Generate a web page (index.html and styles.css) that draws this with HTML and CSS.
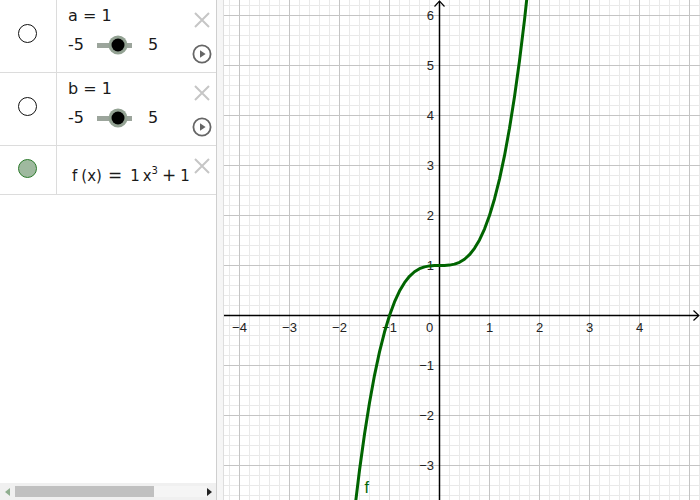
FILE: index.html
```html
<!DOCTYPE html>
<html>
<head>
<meta charset="utf-8">
<link rel="stylesheet" href="styles.css">
</head>
<body>
<div class="app">
  <div class="algebra">
    <div class="row row-slider">
      <div class="marble-col"><span class="marble"></span></div>
      <div class="content">
        <div class="name">a = 1</div>
        <div class="slider-line"><span class="min">-5</span><span class="track"><span class="knob" style="left:60%"></span></span><span class="max">5</span></div>
      </div>
      <div class="controls">
        <svg class="cross" width="18" height="18" viewBox="0 0 18 18"><path d="M2 2L16 16M16 2L2 16"/></svg>
        <svg class="play" width="20" height="20" viewBox="0 0 20 20"><circle cx="10" cy="10" r="8.6"/><path d="M8 6.3L13.6 10L8 13.7Z"/></svg>
      </div>
    </div>
    <div class="row row-slider">
      <div class="marble-col"><span class="marble"></span></div>
      <div class="content">
        <div class="name">b = 1</div>
        <div class="slider-line"><span class="min">-5</span><span class="track"><span class="knob" style="left:60%"></span></span><span class="max">5</span></div>
      </div>
      <div class="controls">
        <svg class="cross" width="18" height="18" viewBox="0 0 18 18"><path d="M2 2L16 16M16 2L2 16"/></svg>
        <svg class="play" width="20" height="20" viewBox="0 0 20 20"><circle cx="10" cy="10" r="8.6"/><path d="M8 6.3L13.6 10L8 13.7Z"/></svg>
      </div>
    </div>
    <div class="row row-func">
      <div class="marble-col func-col"><span class="marble marble-on"></span></div>
      <div class="content">
        <div class="math"><span>f</span><span class="paren">(x)</span><span class="op eq">=</span><span>1</span><span class="var">x</span><sup>3</sup><span class="op plus">+</span><span>1</span></div>
      </div>
      <div class="controls">
        <svg class="cross" width="18" height="18" viewBox="0 0 18 18"><path d="M2 2L16 16M16 2L2 16"/></svg>
      </div>
    </div>
    <div class="spacer"></div>
    <div class="hscroll">
      <span class="arrow-cell"><span class="arr-left"></span></span>
      <span class="thumb"></span>
      <span class="scroll-rest"></span>
      <span class="arr-right"></span>
    </div>
  </div>
  <div class="splitter"></div>
  <div class="graphics">
    <svg class="plot" width="476" height="500" viewBox="0 0 476 500">
      <defs>
        <pattern id="minor" patternUnits="userSpaceOnUse" x="439" y="315" width="10" height="10">
          <path d="M0.5 0V10M0 0.5H10" stroke="#e9e9e9" stroke-width="1" fill="none"/>
        </pattern>
        <pattern id="major" patternUnits="userSpaceOnUse" x="439" y="315" width="50" height="50">
          <path d="M0.5 0V50M0 0.5H50" stroke="#c4c4c4" stroke-width="1" fill="none"/>
        </pattern>
      </defs>
      <g transform="translate(-224 0)">
        <rect x="224" y="0" width="476" height="500" fill="#ffffff"/>
        <rect x="224" y="0" width="476" height="500" fill="url(#minor)"/>
        <rect x="224" y="0" width="476" height="500" fill="url(#major)"/>
        <g class="axes">
          <path d="M224 315.5H698.5"/>
          <path d="M439.5 500V1"/>
          <path class="arrowhead" d="M693.5 310.5L698.8 315.5L693.5 320.5"/>
          <path class="arrowhead" d="M434.5 6.5L439.5 1.2L444.5 6.5"/>
        </g>
        <g class="xlabels">
          <text x="239.5" y="331.5">−4</text>
          <text x="289.5" y="331.5">−3</text>
          <text x="339.5" y="331.5">−2</text>
          <text x="389.5" y="331.5">−1</text>
          <text x="429.5" y="331.5">0</text>
          <text x="489.5" y="331.5">1</text>
          <text x="539.5" y="331.5">2</text>
          <text x="589.5" y="331.5">3</text>
          <text x="639.5" y="331.5">4</text>
        </g>
        <g class="ylabels">
          <text x="434" y="20">6</text>
          <text x="434" y="70">5</text>
          <text x="434" y="120">4</text>
          <text x="434" y="170">3</text>
          <text x="434" y="220">2</text>
          <text x="434" y="270">1</text>
          <text x="434" y="370">−1</text>
          <text x="434" y="420">−2</text>
          <text x="434" y="470">−3</text>
        </g>
        <g transform="translate(439.5 315.5) scale(50 -50)">
          <polyline class="curve" points="-1.75,-4.359 -1.7,-3.913 -1.6,-3.096 -1.5,-2.375 -1.4,-1.744 -1.3,-1.197 -1.2,-0.728 -1.1,-0.331 -1,0 -0.9,0.271 -0.8,0.488 -0.7,0.657 -0.6,0.784 -0.5,0.875 -0.4,0.936 -0.3,0.973 -0.2,0.992 -0.1,0.999 0,1 0.1,1.001 0.2,1.008 0.3,1.027 0.4,1.064 0.5,1.125 0.6,1.216 0.7,1.343 0.8,1.512 0.9,1.729 1,2 1.1,2.331 1.2,2.728 1.3,3.197 1.4,3.744 1.5,4.375 1.6,5.096 1.7,5.913 1.8,6.832"/>
        </g>
        <text class="flabel" x="364.5" y="493">f</text>
      </g>
    </svg>
  </div>
</div>
</body>
</html>
```
FILE: styles.css
```css
* { box-sizing: border-box; }
html, body { margin: 0; padding: 0; }
body {
  width: 700px;
  height: 500px;
  overflow: hidden;
  background: #ffffff;
  font-family: "DejaVu Sans", sans-serif;
}
.app {
  display: flex;
  width: 700px;
  height: 500px;
}
.algebra {
  width: 217px;
  height: 500px;
  border-right: 1px solid #cfcfcf;
  display: flex;
  flex-direction: column;
  color: #1a1a1a;
  font-size: 16px;
}
.row {
  display: flex;
  border-bottom: 1px solid #dcdcdc;
}
.row-slider { height: 73px; }
.row-func { height: 49px; }
.marble-col {
  width: 57px;
  border-right: 1px solid #dcdcdc;
  display: flex;
  justify-content: center;
  padding-top: 24px;
  padding-right: 1px;
}
.func-col { padding-top: 13px; }
.marble {
  display: block;
  width: 19px;
  height: 19px;
  border-radius: 50%;
  border: 1px solid #111;
  background: #fff;
}
.marble-on {
  background: #9fb99f;
  border-color: #2c7a2c;
}
.content {
  flex: 1;
  padding-left: 11px;
  padding-top: 6px;
}
.name {
  height: 20px;
  line-height: 20px;
  white-space: pre;
}
.slider-line {
  margin-top: 9px;
  height: 20px;
  display: flex;
  align-items: center;
  line-height: 20px;
}
.min { width: 16px; }
.track {
  position: relative;
  width: 35px;
  height: 5px;
  margin-left: 13px;
  background: #9ca59c;
}
.knob {
  position: absolute;
  top: 50%;
  width: 13px;
  height: 13px;
  border-radius: 50%;
  background: #000;
  transform: translate(-50%, -50%);
  box-shadow: 0 0 0 3px #93a293;
}
.max { margin-left: 16px; }
.controls {
  width: 22px;
  margin-right: 3px;
  display: flex;
  flex-direction: column;
  padding-top: 11px;
}
.cross {
  display: block;
  margin-left: 2px;
}
.cross path {
  stroke: #c6c6c6;
  stroke-width: 2;
  fill: none;
}
.play {
  display: block;
  margin-left: 1px;
  margin-top: 15px;
}
.play circle {
  stroke: #666;
  stroke-width: 1.8;
  fill: none;
}
.play path { fill: #666; }
.math {
  padding-left: 4px;
  padding-top: 13px;
  font-size: 15px;
  line-height: 20px;
  white-space: nowrap;
}
.paren { margin-left: 4px; }
.op { font-size: 17px; }
.eq { margin-left: 6px; margin-right: 8px; }
.var { margin-left: 3px; }
.math sup {
  font-size: 10px;
  line-height: 0;
  vertical-align: 7px;
}
.plus { margin-left: 4px; margin-right: 4px; }
.spacer { flex: 1; }
.hscroll {
  height: 17px;
  background: #f0f0f0;
  display: flex;
  align-items: center;
}
.arrow-cell {
  width: 15px;
  display: flex;
  padding-left: 5px;
}
.arr-left {
  width: 0;
  height: 0;
  border-top: 4px solid transparent;
  border-bottom: 4px solid transparent;
  border-right: 5px solid #8fae8f;
}
.thumb {
  width: 139px;
  height: 11px;
  background: #c0c0c0;
}
.scroll-rest {
  flex: 1;
  height: 11px;
  background: #f5f5f5;
}
.arr-right {
  width: 0;
  height: 0;
  margin-right: 4px;
  border-top: 4px solid transparent;
  border-bottom: 4px solid transparent;
  border-left: 5px solid #222;
}
.splitter {
  width: 7px;
  height: 500px;
  background: #f6f6f6;
  border-right: 1px solid #dedede;
}
.graphics {
  flex: 1;
  height: 500px;
  overflow: hidden;
}
.plot { display: block; }
.axes path {
  stroke: #000;
  stroke-width: 1.5;
  fill: none;
}
.axes .arrowhead { stroke-width: 1.2; }
.xlabels text, .ylabels text {
  font-family: "Liberation Sans", Arial, sans-serif;
  font-size: 13px;
  fill: #222;
}
.xlabels text { text-anchor: middle; }
.ylabels text { text-anchor: end; }
.curve {
  fill: none;
  stroke: #006400;
  stroke-width: 3;
  stroke-linejoin: round;
  vector-effect: non-scaling-stroke;
}
.flabel {
  font-family: "Liberation Sans", Arial, sans-serif;
  font-size: 16px;
  fill: #006400;
}
```
